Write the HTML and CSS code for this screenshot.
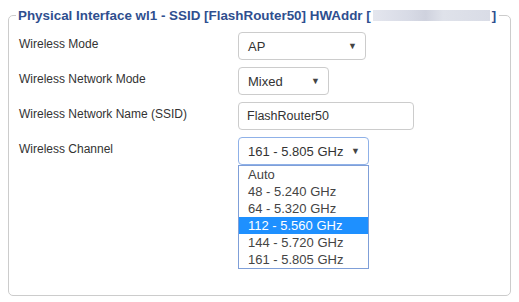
FILE: index.html
```html
<!DOCTYPE html>
<html lang="en">
<head>
    <meta charset="UTF-8">
    <title>Wireless Settings</title>
    <link rel="stylesheet" href="styles.css">
</head>
<body>
    <fieldset class="panel">
        <legend>Physical Interface wl1 - SSID [FlashRouter50] HWAddr [<span class="hwaddr"></span>]</legend>

        <div class="row">
            <div class="label">Wireless Mode</div>
            <div class="select w-mode">AP<span class="arrow">&#9660;</span></div>
        </div>
        <div class="row">
            <div class="label">Wireless Network Mode</div>
            <div class="select w-net">Mixed<span class="arrow">&#9660;</span></div>
        </div>
        <div class="row">
            <div class="label">Wireless Network Name (SSID)</div>
            <div class="input">FlashRouter50</div>
        </div>
        <div class="row">
            <div class="label">Wireless Channel</div>
            <div class="select-wrap">
                <div class="select w-chan focus">161 - 5.805 GHz<span class="arrow">&#9660;</span></div>
                <ul class="options">
                    <li>Auto</li>
                    <li>48 - 5.240 GHz</li>
                    <li>64 - 5.320 GHz</li>
                    <li class="selected">112 - 5.560 GHz</li>
                    <li>144 - 5.720 GHz</li>
                    <li>161 - 5.805 GHz</li>
                </ul>
            </div>
        </div>
    </fieldset>
</body>
</html>
```

FILE: styles.css
```css
body {
    margin: 0;
    padding: 8px;
    background-color: #ffffff;
    font-family: "Liberation Sans", Arial, sans-serif;
    font-size: 13px;
    color: #333333;
}
.panel {
    margin: 0;
    padding: 9px 10px 0 10px;
    border: 1px solid #cccccc;
    border-radius: 5px;
    height: 288px;
    box-sizing: border-box;
}
.panel legend {
    margin-left: -3px;
    padding: 0 3px 0 2px;
    font-weight: bold;
    color: #2f4f8f;
    font-size: 13.4px;
}
.hwaddr {
    display: inline-block;
    width: 117px;
    height: 11px;
    margin: 0 2px;
    vertical-align: -1px;
    background: linear-gradient(90deg, #e4e6ee 0%, #d8dbe6 30%, #cfd2de 45%, #dfe2ea 60%, #d9dce6 100%);
}
.row {
    display: flex;
    align-items: flex-start;
    margin-bottom: 7px;
}
.label {
    width: 219px;
    padding-top: 5px;
    font-size: 12px;
}
.select, .input {
    box-sizing: border-box;
    height: 28px;
    padding: 0 9px;
    border: 1px solid #cccccc;
    border-radius: 4px;
    display: flex;
    align-items: center;
    color: #333333;
    position: relative;
}
.input {
    padding-left: 8px;
    font-size: 12.5px;
}
.arrow {
    position: absolute;
    right: 8px;
    top: 8px;
    font-size: 9px;
    color: #444444;
}
.w-mode { width: 128px; }
.w-net { width: 91px; }
.input { width: 176px; }
.select-wrap {
    position: relative;
}
.w-chan { width: 131px; }
.focus {
    border-color: #8fb1e8;
}
.options {
    position: absolute;
    left: 0;
    top: 28px;
    margin: 0;
    padding: 0;
    list-style: none;
    width: 131px;
    box-sizing: border-box;
    border: 1px solid #7f9fd8;
    background-color: #ffffff;
}
.options li {
    height: 17px;
    line-height: 17px;
    padding-left: 9px;
    color: #444444;
}
.options li.selected {
    background-color: #1e90ff;
    color: #ffffff;
}
```
